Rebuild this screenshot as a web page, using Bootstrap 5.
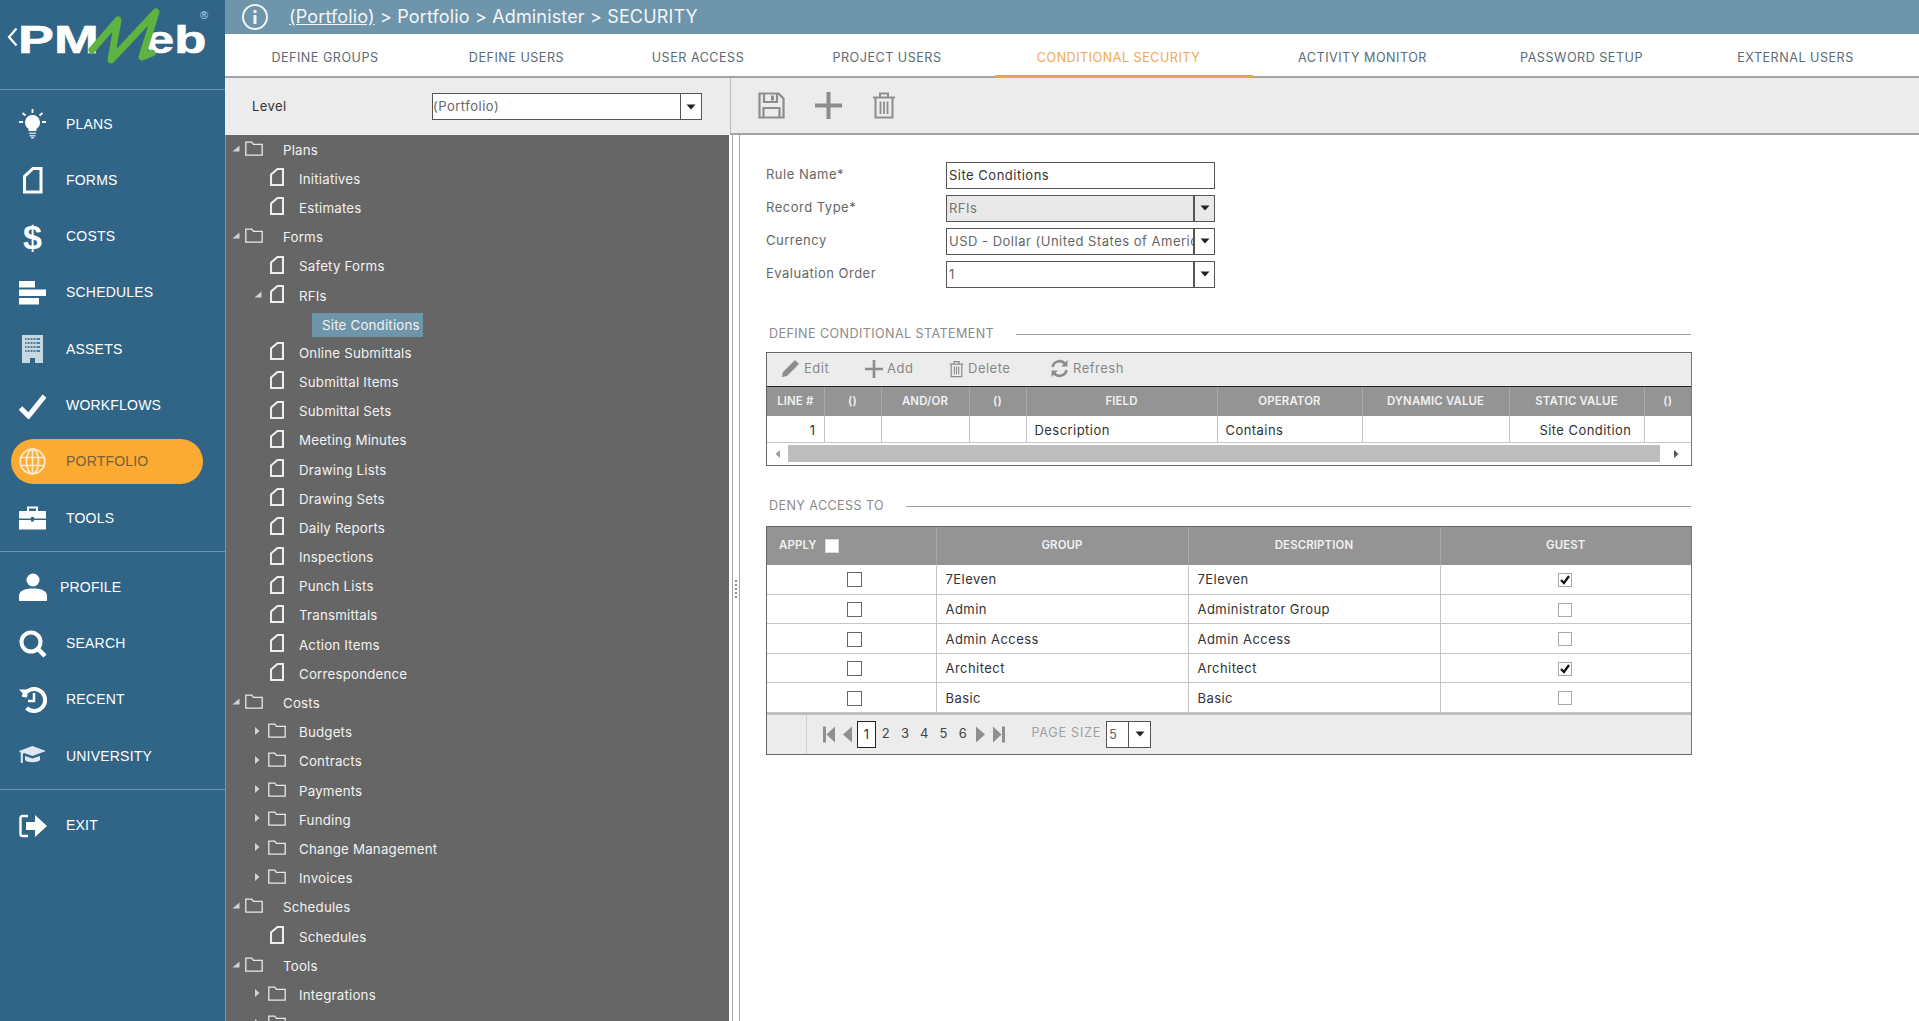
<!DOCTYPE html>
<html lang="en">
<head>
<meta charset="utf-8">
<title>PMWeb - Security</title>
<link href="https://cdn.jsdelivr.net/npm/bootstrap@5.3.0/dist/css/bootstrap.min.css" rel="stylesheet">
<style>
html,body{height:100%;overflow:hidden}
body{font-family:Inter,"Liberation Sans",sans-serif;font-size:13px;color:#333;background:#fff}
.pm-side{width:225px;flex:none;background:#306588;color:#fff;height:1021px;font-family:"Liberation Sans",Arial,sans-serif}
.pm-logo{height:90px;border-bottom:1px solid #6b96b0;position:relative;flex:none;overflow:hidden}
.pm-logo-chev{position:absolute;left:7px;top:27px}
.pm-logo-a,.pm-logo-b{position:absolute;font-weight:700;color:#fff;line-height:1;font-size:39px;transform-origin:left top;-webkit-text-stroke:.6px #fff}
.pm-logo-a{left:18px;top:20px;transform:scaleX(1.38)}
.pm-logo-b{left:145px;top:20px;transform:scaleX(1.35)}
.pm-logo-w{position:absolute;left:88px;top:7px}
.pm-logo-r{position:absolute;left:200px;top:7px;font-size:11px;color:#c5d4de}
.pm-grp{padding:6px 0 5px;border-bottom:1px solid #6b96b0}
.pm-grp:last-child{border-bottom:0}
.pm-grp+.pm-grp{padding-top:7px}
.pm-item{display:flex;align-items:center;height:45px;margin:5.65px 22px 5.65px 11px;padding:0 0 0 8px;color:#fff;font-size:14px;letter-spacing:.2px;text-decoration:none}
.pm-ic{width:47px;flex:none;display:flex;align-items:center;height:32px}
.pm-ic-sm{width:41px}
.pm-dollar{font-weight:700;font-size:34px;line-height:1;padding-left:4px}
.pm-item.pm-on{background:#fbab32;color:#75603b}
.pm-main{flex:1;min-width:0;height:1021px;display:flex;flex-direction:column}
.pm-head{height:34px;flex:none;background:#6f95ab;color:#f3f6f8;font-size:18px;letter-spacing:.15px;padding:0 0 1px 17px;gap:21px}
.pm-head a{color:#f3f6f8}
.pm-tabs{height:44px;flex:none;border-bottom:2px solid #a3a3a3;padding-left:1px}
.pm-tabs .nav-link{height:44px;padding:7px 0 0;display:flex;align-items:center;color:#5b6b76;font-size:12.6px;letter-spacing:.5px;border-bottom:3px solid transparent;border-radius:0;justify-content:center}
.pm-tabs .nav-link.active{color:#f0a850;border-bottom-color:#e3a552;padding-right:11px}
.pm-t1{width:198px}.pm-t2{width:185px}.pm-t3{width:178px}.pm-t4{width:208px}.pm-t5{width:258px}.pm-t6{width:219px}.pm-t7{width:219px}.pm-t8{width:209px}
.pm-t4 .nav-link{padding-right:8px}
.pm-work{flex:1;min-height:0;display:flex}
.pm-left{width:504px;flex:none;display:flex;flex-direction:column;min-height:0}
.pm-bar{height:57px;flex:none;background:#ececec}
.pm-level{padding-left:27px;color:#333;font-size:13px;letter-spacing:.4px;gap:0}
.pm-level-l{width:180px}
.pm-sel{display:flex;height:27px;border:1px solid #555;background:#fff;font-size:13px;letter-spacing:.5px;align-items:stretch;color:#666}
.pm-sel-v{flex:1;min-width:0;overflow:hidden;white-space:nowrap;padding-left:2px;line-height:25px}
.pm-sel-b{width:21px;flex:none;border-left:1px solid #555;display:flex;align-items:center;justify-content:center}
.pm-sel-lvl{width:270px}
.pm-sel-lvl .pm-sel-v{padding-left:0}
.pm-tree{flex:1;min-height:0;overflow:hidden;background:#666;margin:0;padding:1px 0 0;color:#f2f2f2;border-left:1px solid #7d93a3}
.pm-r{height:29.2px;display:flex;align-items:center;white-space:nowrap;font-size:13.3px;letter-spacing:.2px}
.pm-l0{padding-left:6px}.pm-l1{padding-left:28px}
.pm-car{flex:none;display:flex;align-items:center;margin-bottom:5px}
.pm-l0 .pm-car{width:13px}.pm-l1 .pm-car{width:14px}
.pm-i{flex:none;margin-bottom:5px;display:flex}
.pm-l0 .pm-i{width:38px}.pm-l1 .pm-i{width:31px}
.pm-doc{padding-left:2px}
.pm-l2{padding-left:86px;height:28px}
.pm-hl{background:#6f95ab;height:24px;line-height:24px;padding:0 3px 0 10px}
.pm-split{width:11px;flex:none;display:flex;flex-direction:column}
.pm-split-b{flex:1;border-left:1px solid #a8a8a8;border-right:1px solid #a8a8a8;margin-left:3px;display:flex;align-items:center;justify-content:center}
.pm-dots{width:2px;height:18px;background:repeating-linear-gradient(#7c8f9c 0 2px,transparent 2px 4px);position:relative;top:11px}
.pm-right{flex:1;min-width:0;display:flex;flex-direction:column}
.pm-rbar{border-bottom:2px solid #a3a3a3;border-left:1px solid #bcbcbc;margin-left:-10px;padding-left:27px;gap:30px}
.pm-body{padding:27px 228px 0 26px;overflow:hidden}
.pm-f{height:26px;margin-bottom:7px;color:#666;font-size:13px;letter-spacing:.5px}
.pm-f-l{width:180px;flex:none}
.pm-f .pm-sel,.pm-txt{width:269px;height:27px}
.pm-txt{border:1px solid #555;background:#fff;padding:0 2px;line-height:25px;color:#333;border-radius:0;letter-spacing:.5px}
.pm-dis .pm-sel-v{background:#e9e9e9;color:#777}
.pm-dis .pm-sel-b{background:#e9e9e9}
.pm-sel-b2{border-left-width:2px}
.pm-h{height:18px;color:#8a8a8a;font-size:12.6px;letter-spacing:.4px;padding-left:3px;gap:22px;margin:0 0 10px}
.pm-h1{margin-top:38px;margin-bottom:9px}.pm-h2{margin-top:32px}
.pm-rule{flex:1;border-top:1px solid #a0a0a0}
.pm-grid{border:1px solid #666;border-right-color:#777;width:926px}
.pm-tool{height:34px;background:#ececec;border-bottom:1px solid #222;padding:0 0 2px 14px;color:#888;font-size:13px;letter-spacing:.5px}
.pm-tb{display:flex;align-items:center;gap:4px}
.pm-tb1{width:84px}.pm-tb2{width:84px}.pm-tb3{width:101px}
.pm-table{table-layout:fixed;margin:0;--bs-table-border-color:#c4c4c4;width:100%}
.pm-table>thead>tr>th{background:#949494;color:#f1f1f1;font-weight:600;font-size:11.4px;text-align:center;padding:1px 0 0;height:29px;border:0;border-right:1px solid #a9a9a9;vertical-align:middle;letter-spacing:.15px}
.pm-table>tbody>tr>td{padding:3px 8px 0;height:26px;font-size:13px;color:#333;border:0;border-right:1px solid #c4c4c4;border-bottom:1px solid #c4c4c4;vertical-align:middle;white-space:nowrap;letter-spacing:.45px}
.pm-table th:last-child,.pm-table td:last-child{border-right:0!important}
.pm-table>tbody>tr>td.pm-stat{padding-right:12px}
.pm-ta{width:57px}.pm-tb-c{width:57px}.pm-tc{width:88px}.pm-td{width:57px}.pm-te{width:191px}.pm-tf{width:145px}.pm-tg{width:147px}.pm-th{width:135px}
.pm-scroll{height:22px;display:flex;align-items:center;background:#fff}
.pm-scroll-a{width:21px;flex:none;display:flex;justify-content:center}
.pm-thumb{flex:1;height:17px;background:#bdbdbd}
.pm-scroll-z{width:31px}
.pm-deny th{height:38px!important}
.pm-table.pm-deny td{height:29.6px!important;padding:2px 9px 0!important}
.pm-table.pm-deny td.pm-c1{padding:0 9px 0 16px!important}
.pm-table.pm-deny td.pm-c4{padding:0 11px 0 9px!important}
.pm-w1{width:169px}.pm-w2{width:252px}.pm-w3{width:252px}
.pm-ck{width:15px;height:15px;border:1px solid #666;background:#fff;display:inline-flex;vertical-align:middle;margin:0;border-radius:0}
.pm-ck-l{border-color:#aaa;width:14px;height:14px}
.pm-ck-w{border:1px solid #d8d8d8;width:14px;height:14px;margin-left:8px}
.pm-cc{text-align:center}
.pm-apply{display:flex;align-items:center;padding-left:12px}
.pm-pager{height:41px;background:#ececec;border-top:2px solid #bdbdbd;font-size:13px;color:#444}
.pm-p0{width:40px;height:100%;border-right:1px solid #cfcfcf;flex:none}
.pm-pg{display:flex;align-items:center;padding-left:16px;gap:0}
.pm-pi{display:flex;align-items:center}
.pm-num{width:19.3px;text-align:center;line-height:1;padding-bottom:2px}
.pm-cur{width:19px;height:27px;border:1px solid #222;background:#fff;display:flex;align-items:center;justify-content:center;margin:0 0 0 5px;color:#333}
.pm-psz{color:#a0a0a0;font-size:12.6px;margin:0 5px 0 26px;letter-spacing:.75px;padding-bottom:2px}
.pm-sel-sz{width:45px}
.pm-sel-sz .pm-sel-b{width:22px}
</style>
</head>
<body class="d-flex">
<svg width="0" height="0" class="d-none" aria-hidden="true">
<symbol id="s-folder" viewBox="0 0 18 15"><path d="M.8 14.2V1.2h6l1.6 2.2h8.8v10.8z" fill="none" stroke="#e9e9e9" stroke-width="1.3"/></symbol>
<symbol id="s-doc" viewBox="0 0 14 18"><path d="M1 17V6.5L7.500 1H13V17z" fill="none" stroke="#ededed" stroke-width="2.100"/></symbol>
<symbol id="s-open" viewBox="0 0 8 7"><path d="M7.5.5V6.5H.5z" fill="#d2d2d2"/></symbol>
<symbol id="s-closed" viewBox="0 0 6 10"><path d="M1 1l4.5 4L1 9z" fill="#d2d2d2"/></symbol>
<symbol id="s-dn" viewBox="0 0 10 6"><path d="M.5.5h9L5 5.500z" fill="#222"/></symbol>
<symbol id="s-trash" viewBox="0 0 24 27"><g fill="none" stroke="#8d8d8d" stroke-width="2"><path d="M1 5.500h22M8 5V1.500h8V5M3.500 6v19.500h17V6"/><path d="M8.500 9.500v12.500M12 9.500v12.500M15.500 9.500v12.500" stroke-width="1.800"/></g></symbol>
<symbol id="s-plus" viewBox="0 0 27 27"><path d="M11.500 0h4v11.500H27v4H15.500V27h-4V15.500H0v-4h11.500z" fill="#8d8d8d"/></symbol>
</svg>

<aside class="pm-side d-flex flex-column">
  <div class="pm-logo">
    <svg class="pm-logo-chev" width="11" height="20" viewBox="0 0 11 20"><path d="M9.500 1.500L2 10l7.500 8.500" fill="none" stroke="#fff" stroke-width="2.200"/></svg>
    <span class="pm-logo-a">PM</span>
    <span class="pm-logo-b">eb</span>
    <svg class="pm-logo-w" width="72" height="58" viewBox="0 0 72 58"><path d="M4 43L30 13 23 53 68 5 54 50 64 46" fill="none" stroke="#5fb341" stroke-width="7" stroke-linecap="round" stroke-linejoin="round"/></svg>
    <span class="pm-logo-r">®</span>
  </div>
  <nav class="pm-grp nav flex-column">
    <a class="pm-item" href="#"><span class="pm-ic"><svg width="27" height="30" viewBox="0 0 27 30"><g fill="#fff"><path d="M13.500 6a7.500 7.500 0 0 0-4 13.800V22h8v-2.200A7.500 7.500 0 0 0 13.500 6z"/><path d="M10 23.500h7v1.500h-7zM10.500 26h6v1.500h-6zM12 28h3v1.500h-3z" fill="#c9d6de"/></g><path d="M13.500 0v4M3.500 4l3 2.500M23.500 4l-3 2.500M0 13h4M23 13h4" stroke="#fff" stroke-width="1.800"/></svg></span>PLANS</a>
    <a class="pm-item" href="#"><span class="pm-ic"><svg width="27" height="28" viewBox="0 0 27 28"><path d="M5.500 26V10.500L14 2.500h8V26z" fill="none" stroke="#fff" stroke-width="3"/></svg></span>FORMS</a>
    <a class="pm-item" href="#"><span class="pm-ic"><span class="pm-dollar">$</span></span>COSTS</a>
    <a class="pm-item" href="#"><span class="pm-ic"><svg width="27" height="24" viewBox="0 0 27 24"><path d="M0 0h16v6.500H0zM0 8.500h27v6.500H0zM0 17h20v6.500H0z" fill="#fff"/></svg></span>SCHEDULES</a>
    <a class="pm-item" href="#"><span class="pm-ic"><svg width="27" height="28" viewBox="0 0 27 28"><path d="M3 0h21v28H16v-5h-5v5H3z" fill="#c8d8e3"/><path d="M6 3h15v2H6zM6 7h15v2H6zM6 11h15v2H6zM6 15h15v2H6z" fill="#4f7d9b"/><path d="M8 3v14M11 3v14M14 3v14M17 3v14" stroke="#c8d8e3" stroke-width="1"/></svg></span>ASSETS</a>
    <a class="pm-item" href="#"><span class="pm-ic"><svg width="27" height="26" viewBox="0 0 27 26"><path d="M1.500 15L9.500 23 25.500 3" fill="none" stroke="#fff" stroke-width="5"/></svg></span>WORKFLOWS</a>
    <a class="pm-item pm-on rounded-pill" href="#"><span class="pm-ic"><svg width="27" height="27" viewBox="0 0 27 27"><g fill="none" stroke="#fdeacb" stroke-width="1.700"><circle cx="13.500" cy="13.500" r="12.300"/><ellipse cx="13.500" cy="13.500" rx="6" ry="12.300"/><path d="M13.500 1v25M1.500 9.500h24M1.500 17.500h24"/></g></svg></span>PORTFOLIO</a>
    <a class="pm-item" href="#"><span class="pm-ic"><svg width="27" height="24" viewBox="0 0 27 24"><path d="M9 5V1.500h9V5" fill="none" stroke="#fff" stroke-width="2"/><path d="M0 5h27v7.500H15v-1.500h-3v1.500H0zM0 14h12v1.500h3V14h12v9.500H0z" fill="#fff"/></svg></span>TOOLS</a>
  </nav>
  <nav class="pm-grp nav flex-column">
    <a class="pm-item" href="#"><span class="pm-ic pm-ic-sm"><svg width="28" height="28" viewBox="0 0 28 28"><circle cx="14" cy="7" r="6.500" fill="#fff"/><path d="M0 28v-5c0-5 5-7.500 14-7.500s14 2.500 14 7.500v5z" fill="#fff"/></svg></span>PROFILE</a>
    <a class="pm-item" href="#"><span class="pm-ic"><svg width="28" height="28" viewBox="0 0 28 28"><circle cx="12" cy="12" r="9.500" fill="none" stroke="#fff" stroke-width="4"/><path d="M18.500 18.500L26 26" stroke="#fff" stroke-width="4.500"/></svg></span>SEARCH</a>
    <a class="pm-item" href="#"><span class="pm-ic"><svg width="28" height="29" viewBox="0 0 28 29"><path d="M4.500 12a11 11 0 1 1 3 11" fill="none" stroke="#fff" stroke-width="4"/><path d="M0 4.500l9 0-1 8.500z" fill="#fff"/><path d="M15 8v8h-6" fill="none" stroke="#fff" stroke-width="2.500"/></svg></span>RECENT</a>
    <a class="pm-item" href="#"><span class="pm-ic"><svg width="27" height="20" viewBox="0 0 27 20"><path d="M13.500 0L27 5 13.500 10 5 7 3.800 8v9l-2 0V7L0 5z" fill="#dfe8ee"/><path d="M6 10l7.500 2.500L21 10v4c-2 3-13 3-15 0z" fill="#dfe8ee"/></svg></span>UNIVERSITY</a>
  </nav>
  <nav class="pm-grp nav flex-column">
    <a class="pm-item" href="#"><span class="pm-ic"><svg width="28" height="24" viewBox="0 0 28 24"><path d="M9 2H3.500A2 2 0 0 0 1.500 4v16a2 2 0 0 0 2 2H9" fill="none" stroke="#fff" stroke-width="2.400"/><path d="M7 8h9V1l12 11-12 11v-7H7z" fill="#fff"/></svg></span>EXIT</a>
  </nav>
</aside>

<main class="pm-main">
  <header class="pm-head d-flex align-items-center">
    <svg width="26" height="26" viewBox="0 0 26 26"><circle cx="13" cy="13" r="12" fill="none" stroke="#f0f4f6" stroke-width="2"/><path d="M11.500 6h3v3h-3zM11.500 11h3v9h-3z" fill="#f0f4f6"/></svg>
    <div><a href="#">(Portfolio)</a> &gt; Portfolio &gt; Administer &gt; SECURITY</div>
  </header>
  <ul class="pm-tabs nav">
    <li class="nav-item pm-t1"><a class="nav-link" href="#">DEFINE GROUPS</a></li>
    <li class="nav-item pm-t2"><a class="nav-link" href="#">DEFINE USERS</a></li>
    <li class="nav-item pm-t3"><a class="nav-link" href="#">USER ACCESS</a></li>
    <li class="nav-item pm-t4"><a class="nav-link" href="#">PROJECT USERS</a></li>
    <li class="nav-item pm-t5"><a class="nav-link active" href="#">CONDITIONAL SECURITY</a></li>
    <li class="nav-item pm-t6"><a class="nav-link" href="#">ACTIVITY MONITOR</a></li>
    <li class="nav-item pm-t7"><a class="nav-link" href="#">PASSWORD SETUP</a></li>
    <li class="nav-item pm-t8"><a class="nav-link" href="#">EXTERNAL USERS</a></li>
  </ul>
  <div class="pm-work">
    <section class="pm-left">
      <div class="pm-bar pm-level d-flex align-items-center">
        <span class="pm-level-l">Level</span>
        <div class="pm-sel pm-sel-lvl"><span class="pm-sel-v">(Portfolio)</span><span class="pm-sel-b"><svg width="10" height="6"><use href="#s-dn"/></svg></span></div>
      </div>
      <ul class="pm-tree list-unstyled">
        <li class="pm-r pm-l0"><span class="pm-car"><svg width="8" height="7"><use href="#s-open"/></svg></span><span class="pm-i"><svg width="18" height="15"><use href="#s-folder"/></svg></span>Plans</li>
        <li class="pm-r pm-l1"><span class="pm-car"></span><span class="pm-i pm-doc"><svg width="14" height="18"><use href="#s-doc"/></svg></span>Initiatives</li>
        <li class="pm-r pm-l1"><span class="pm-car"></span><span class="pm-i pm-doc"><svg width="14" height="18"><use href="#s-doc"/></svg></span>Estimates</li>
        <li class="pm-r pm-l0"><span class="pm-car"><svg width="8" height="7"><use href="#s-open"/></svg></span><span class="pm-i"><svg width="18" height="15"><use href="#s-folder"/></svg></span>Forms</li>
        <li class="pm-r pm-l1"><span class="pm-car"></span><span class="pm-i pm-doc"><svg width="14" height="18"><use href="#s-doc"/></svg></span>Safety Forms</li>
        <li class="pm-r pm-l1"><span class="pm-car"><svg width="8" height="7"><use href="#s-open"/></svg></span><span class="pm-i pm-doc"><svg width="14" height="18"><use href="#s-doc"/></svg></span>RFIs</li>
        <li class="pm-r pm-l2"><span class="pm-hl">Site Conditions</span></li>
        <li class="pm-r pm-l1"><span class="pm-car"></span><span class="pm-i pm-doc"><svg width="14" height="18"><use href="#s-doc"/></svg></span>Online Submittals</li>
        <li class="pm-r pm-l1"><span class="pm-car"></span><span class="pm-i pm-doc"><svg width="14" height="18"><use href="#s-doc"/></svg></span>Submittal Items</li>
        <li class="pm-r pm-l1"><span class="pm-car"></span><span class="pm-i pm-doc"><svg width="14" height="18"><use href="#s-doc"/></svg></span>Submittal Sets</li>
        <li class="pm-r pm-l1"><span class="pm-car"></span><span class="pm-i pm-doc"><svg width="14" height="18"><use href="#s-doc"/></svg></span>Meeting Minutes</li>
        <li class="pm-r pm-l1"><span class="pm-car"></span><span class="pm-i pm-doc"><svg width="14" height="18"><use href="#s-doc"/></svg></span>Drawing Lists</li>
        <li class="pm-r pm-l1"><span class="pm-car"></span><span class="pm-i pm-doc"><svg width="14" height="18"><use href="#s-doc"/></svg></span>Drawing Sets</li>
        <li class="pm-r pm-l1"><span class="pm-car"></span><span class="pm-i pm-doc"><svg width="14" height="18"><use href="#s-doc"/></svg></span>Daily Reports</li>
        <li class="pm-r pm-l1"><span class="pm-car"></span><span class="pm-i pm-doc"><svg width="14" height="18"><use href="#s-doc"/></svg></span>Inspections</li>
        <li class="pm-r pm-l1"><span class="pm-car"></span><span class="pm-i pm-doc"><svg width="14" height="18"><use href="#s-doc"/></svg></span>Punch Lists</li>
        <li class="pm-r pm-l1"><span class="pm-car"></span><span class="pm-i pm-doc"><svg width="14" height="18"><use href="#s-doc"/></svg></span>Transmittals</li>
        <li class="pm-r pm-l1"><span class="pm-car"></span><span class="pm-i pm-doc"><svg width="14" height="18"><use href="#s-doc"/></svg></span>Action Items</li>
        <li class="pm-r pm-l1"><span class="pm-car"></span><span class="pm-i pm-doc"><svg width="14" height="18"><use href="#s-doc"/></svg></span>Correspondence</li>
        <li class="pm-r pm-l0"><span class="pm-car"><svg width="8" height="7"><use href="#s-open"/></svg></span><span class="pm-i"><svg width="18" height="15"><use href="#s-folder"/></svg></span>Costs</li>
        <li class="pm-r pm-l1"><span class="pm-car"><svg width="6" height="10"><use href="#s-closed"/></svg></span><span class="pm-i"><svg width="18" height="15"><use href="#s-folder"/></svg></span>Budgets</li>
        <li class="pm-r pm-l1"><span class="pm-car"><svg width="6" height="10"><use href="#s-closed"/></svg></span><span class="pm-i"><svg width="18" height="15"><use href="#s-folder"/></svg></span>Contracts</li>
        <li class="pm-r pm-l1"><span class="pm-car"><svg width="6" height="10"><use href="#s-closed"/></svg></span><span class="pm-i"><svg width="18" height="15"><use href="#s-folder"/></svg></span>Payments</li>
        <li class="pm-r pm-l1"><span class="pm-car"><svg width="6" height="10"><use href="#s-closed"/></svg></span><span class="pm-i"><svg width="18" height="15"><use href="#s-folder"/></svg></span>Funding</li>
        <li class="pm-r pm-l1"><span class="pm-car"><svg width="6" height="10"><use href="#s-closed"/></svg></span><span class="pm-i"><svg width="18" height="15"><use href="#s-folder"/></svg></span>Change Management</li>
        <li class="pm-r pm-l1"><span class="pm-car"><svg width="6" height="10"><use href="#s-closed"/></svg></span><span class="pm-i"><svg width="18" height="15"><use href="#s-folder"/></svg></span>Invoices</li>
        <li class="pm-r pm-l0"><span class="pm-car"><svg width="8" height="7"><use href="#s-open"/></svg></span><span class="pm-i"><svg width="18" height="15"><use href="#s-folder"/></svg></span>Schedules</li>
        <li class="pm-r pm-l1"><span class="pm-car"></span><span class="pm-i pm-doc"><svg width="14" height="18"><use href="#s-doc"/></svg></span>Schedules</li>
        <li class="pm-r pm-l0"><span class="pm-car"><svg width="8" height="7"><use href="#s-open"/></svg></span><span class="pm-i"><svg width="18" height="15"><use href="#s-folder"/></svg></span>Tools</li>
        <li class="pm-r pm-l1"><span class="pm-car"><svg width="6" height="10"><use href="#s-closed"/></svg></span><span class="pm-i"><svg width="18" height="15"><use href="#s-folder"/></svg></span>Integrations</li>
        <li class="pm-r pm-l1"><span class="pm-car"><svg width="6" height="10"><use href="#s-closed"/></svg></span><span class="pm-i"><svg width="18" height="15"><use href="#s-folder"/></svg></span></li>
      </ul>
    </section>
    <div class="pm-split">
      <div class="pm-bar"></div>
      <div class="pm-split-b"><span class="pm-dots"></span></div>
    </div>
    <section class="pm-right">
      <div class="pm-bar pm-rbar d-flex align-items-center">
        <svg width="27" height="27" viewBox="0 0 27 27"><g fill="none" stroke="#8d8d8d" stroke-width="2.200"><path d="M1.500 1.500h19l5 5v19h-24z"/><path d="M6 2v8h13V2M5.500 25v-9h16v9"/></g><path d="M13 3.500h3v5h-3z" fill="#8d8d8d"/></svg>
        <svg width="27" height="27"><use href="#s-plus"/></svg>
        <svg width="24" height="27"><use href="#s-trash"/></svg>
      </div>
      <div class="pm-body">
        <div class="pm-f d-flex align-items-center"><span class="pm-f-l">Rule Name*</span><div class="pm-txt">Site Conditions</div></div>
        <div class="pm-f d-flex align-items-center"><span class="pm-f-l">Record Type*</span><div class="pm-sel pm-dis"><span class="pm-sel-v">RFIs</span><span class="pm-sel-b pm-sel-b2"><svg width="10" height="6"><use href="#s-dn"/></svg></span></div></div>
        <div class="pm-f d-flex align-items-center"><span class="pm-f-l">Currency</span><div class="pm-sel"><span class="pm-sel-v">USD - Dollar (United States of America)</span><span class="pm-sel-b pm-sel-b2"><svg width="10" height="6"><use href="#s-dn"/></svg></span></div></div>
        <div class="pm-f d-flex align-items-center"><span class="pm-f-l">Evaluation Order</span><div class="pm-sel"><span class="pm-sel-v">1</span><span class="pm-sel-b pm-sel-b2"><svg width="10" height="6"><use href="#s-dn"/></svg></span></div></div>

        <div class="pm-h pm-h1 d-flex align-items-center"><span>DEFINE CONDITIONAL STATEMENT</span><span class="pm-rule"></span></div>
        <div class="pm-grid">
          <div class="pm-tool d-flex align-items-center">
            <span class="pm-tb pm-tb1"><svg width="19" height="19" viewBox="0 0 19 19"><path d="M14 1l4 4L6 17l-5 1 1-5z" fill="#8d8d8d"/></svg>Edit</span>
            <span class="pm-tb pm-tb2"><svg width="18" height="18"><use href="#s-plus"/></svg>Add</span>
            <span class="pm-tb pm-tb3"><svg width="15" height="18"><use href="#s-trash"/></svg>Delete</span>
            <span class="pm-tb"><svg width="19" height="19" viewBox="0 0 19 19"><g fill="none" stroke="#8d8d8d" stroke-width="2.600"><path d="M2.500 8A7 7 0 0 1 15 5M16.500 11A7 7 0 0 1 4 14"/></g><path d="M17.500 1v6.500H11zM1.500 18v-6.500H8z" fill="#8d8d8d"/></svg>Refresh</span>
          </div>
          <table class="table pm-table">
            <colgroup><col class="pm-ta"><col class="pm-tb-c"><col class="pm-tc"><col class="pm-td"><col class="pm-te"><col class="pm-tf"><col class="pm-tg"><col class="pm-th"><col></colgroup>
            <thead><tr><th>LINE #</th><th>()</th><th>AND/OR</th><th>()</th><th>FIELD</th><th>OPERATOR</th><th>DYNAMIC VALUE</th><th>STATIC VALUE</th><th>()</th></tr></thead>
            <tbody><tr><td class="text-end">1</td><td></td><td></td><td></td><td>Description</td><td>Contains</td><td></td><td class="text-end pm-stat">Site Condition</td><td></td></tr></tbody>
          </table>
          <div class="pm-scroll">
            <span class="pm-scroll-a"><svg width="6" height="10" viewBox="0 0 6 10"><path d="M5 1L.5 5 5 9z" fill="#999"/></svg></span>
            <span class="pm-thumb"></span>
            <span class="pm-scroll-a pm-scroll-z"><svg width="6" height="10" viewBox="0 0 6 10"><path d="M1 1l4.500 4L1 9z" fill="#555"/></svg></span>
          </div>
        </div>

        <div class="pm-h pm-h2 d-flex align-items-center"><span>DENY ACCESS TO</span><span class="pm-rule"></span></div>
        <div class="pm-grid">
          <table class="table pm-table pm-deny">
            <colgroup><col class="pm-w1"><col class="pm-w2"><col class="pm-w3"><col></colgroup>
            <thead><tr><th><div class="pm-apply">APPLY<span class="pm-ck pm-ck-w"></span></div></th><th>GROUP</th><th>DESCRIPTION</th><th>GUEST</th></tr></thead>
            <tbody>
              <tr><td class="pm-cc pm-c1"><span class="pm-ck"></span></td><td>7Eleven</td><td>7Eleven</td><td class="pm-cc pm-c4"><span class="pm-ck pm-ck-l"><svg width="12" height="12" viewBox="0 0 12 12"><path d="M2 6l3 3 5-7" fill="none" stroke="#111" stroke-width="2.200"/></svg></span></td></tr>
              <tr><td class="pm-cc pm-c1"><span class="pm-ck"></span></td><td>Admin</td><td>Administrator Group</td><td class="pm-cc pm-c4"><span class="pm-ck pm-ck-l"></span></td></tr>
              <tr><td class="pm-cc pm-c1"><span class="pm-ck"></span></td><td>Admin Access</td><td>Admin Access</td><td class="pm-cc pm-c4"><span class="pm-ck pm-ck-l"></span></td></tr>
              <tr><td class="pm-cc pm-c1"><span class="pm-ck"></span></td><td>Architect</td><td>Architect</td><td class="pm-cc pm-c4"><span class="pm-ck pm-ck-l"><svg width="12" height="12" viewBox="0 0 12 12"><path d="M2 6l3 3 5-7" fill="none" stroke="#111" stroke-width="2.200"/></svg></span></td></tr>
              <tr><td class="pm-cc pm-c1"><span class="pm-ck"></span></td><td>Basic</td><td>Basic</td><td class="pm-cc pm-c4"><span class="pm-ck pm-ck-l"></span></td></tr>
            </tbody>
          </table>
          <div class="pm-pager d-flex align-items-center">
            <span class="pm-p0"></span>
            <div class="pm-pg">
              <span class="pm-pi"><svg width="29" height="17" viewBox="0 0 29 17"><path d="M0 .5h3v16H0zM12 .5v16L3.500 8.500zM29 .5v16L20 8.500z" fill="#8f8f8f"/></svg></span>
              <span class="pm-cur">1</span>
              <span class="pm-num">2</span><span class="pm-num">3</span><span class="pm-num">4</span><span class="pm-num">5</span><span class="pm-num">6</span>
              <span class="pm-pi ms-1"><svg width="29" height="17" viewBox="0 0 29 17"><path d="M0 .5v16L9 8.500zM17 .5v16l8.500-8zM26 .5h3v16h-3z" fill="#8f8f8f"/></svg></span>
              <span class="pm-psz">PAGE SIZE</span>
              <div class="pm-sel pm-sel-sz"><span class="pm-sel-v">5</span><span class="pm-sel-b"><svg width="10" height="6"><use href="#s-dn"/></svg></span></div>
            </div>
          </div>
        </div>
      </div>
    </section>
  </div>
</main>
<script src="https://cdn.jsdelivr.net/npm/bootstrap@5.3.0/dist/js/bootstrap.bundle.min.js"></script>
</body>
</html>
